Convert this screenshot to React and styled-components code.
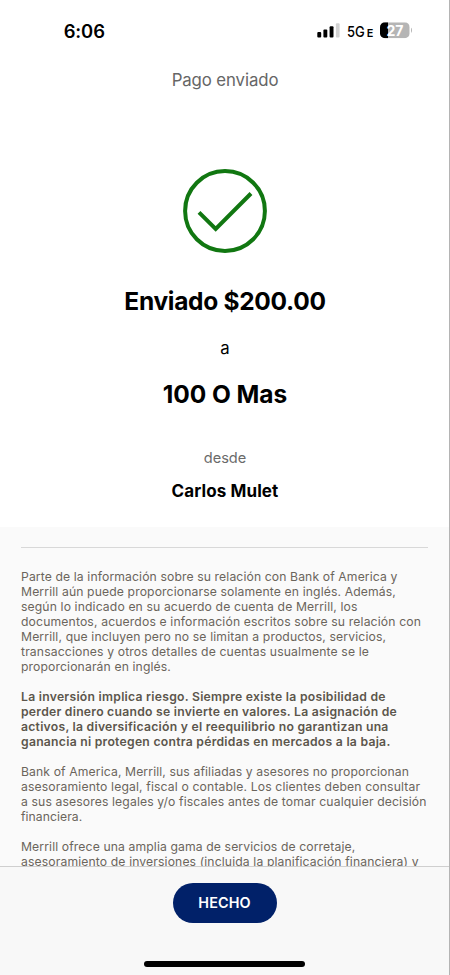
import React from 'react';
import styled, { createGlobalStyle } from 'styled-components';

const GlobalStyle = createGlobalStyle`
  * {
    box-sizing: border-box;
  }
  body {
    margin: 0;
    background: #fff;
  }
`;

const Screen = styled.div`
  width: 450px;
  height: 975px;
  display: flex;
  flex-direction: column;
  overflow: hidden;
  background: #fff;
  border-right: 1px solid #b4b4b4;
  font-family: Inter, 'Liberation Sans', sans-serif;
`;

// iOS status bar
const StatusBar = styled.header`
  flex: none;
  height: 62px;
  padding: 0 37px 0 63.7px;
  display: flex;
  align-items: center;
  justify-content: space-between;
`;

const Time = styled.span`
  font-size: 18.4px;
  font-weight: 600;
  letter-spacing: -0.1px;
  color: #000;
`;

const StatusIcons = styled.svg`
  width: 98px;
  height: 24px;
  font-family: Inter, 'Liberation Sans', sans-serif;
`;

const Title = styled.h1`
  flex: none;
  height: 36px;
  margin: 0;
  padding-left: 1px;
  text-align: center;
  font-size: 16.8px;
  font-weight: 400;
  line-height: 36px;
  letter-spacing: -0.1px;
  color: #666;
`;

const Summary = styled.section`
  flex: none;
  height: 428.5px;
  padding: 70px 0 0 1px;
  display: flex;
  flex-direction: column;
  align-items: center;
`;

const Check = styled.svg`
  width: 86px;
  height: 86px;
  flex: none;
`;

const Line = styled.div`
  flex: none;
  height: ${props => props.$height};
  line-height: ${props => props.$height};
  margin-top: ${props => props.$gap || '0'};
  font-size: ${props => props.$size};
  font-weight: ${props => props.$weight || 400};
  letter-spacing: ${props => props.$track || '0'};
  color: ${props => props.$color || '#000'};
  white-space: nowrap;
`;

const Disclosures = styled.section`
  flex: 1;
  min-height: 0;
  overflow: hidden;
  padding: 20.5px 21px 0;
  background: #fafafa;
`;

const Divider = styled.hr`
  height: 1px;
  margin: 0 0 21.3px;
  border: 0;
  background: #d8d8d8;
`;

const Paragraph = styled.p`
  margin: 0 0 14.98px;
  font-size: 12.2px;
  font-weight: ${props => (props.$strong ? 600 : 400)};
  line-height: 14.98px;
  color: ${props => (props.$strong ? '#5c564c' : '#6b655c')};
  white-space: nowrap;
`;

const Row = styled.span`
  display: block;
  letter-spacing: ${props => props.$track};
`;

const Footer = styled.footer`
  flex: none;
  height: 109px;
  padding: 16px 0 0;
  display: flex;
  flex-direction: column;
  align-items: center;
  background: #f8f8f8;
  border-top: 1px solid #cfcfcf;
`;

const DoneButton = styled.button`
  width: 104px;
  height: 39.5px;
  padding: 0;
  border: 0;
  border-radius: 20px;
  background: #012169;
  color: #fff;
  font-family: inherit;
  font-size: 14.4px;
  font-weight: 600;
  letter-spacing: 0.1px;
`;

const HomeIndicator = styled.div`
  width: 161px;
  height: 5.5px;
  margin-top: 38.5px;
  border-radius: 3px;
  background: #000;
`;

// each line carries its own tracking
const paragraphs = [
  {
    lines: [
      ['Parte de la información sobre su relación con Bank of America y', '0.11px'],
      ['Merrill aún puede proporcionarse solamente en inglés. Además,', '0.12px'],
      ['según lo indicado en su acuerdo de cuenta de Merrill, los', '0.12px'],
      ['documentos, acuerdos e información escritos sobre su relación con', '0.14px'],
      ['Merrill, que incluyen pero no se limitan a productos, servicios,', '0.13px'],
      ['transacciones y otros detalles de cuentas usualmente se le', '0.14px'],
      ['proporcionarán en inglés.', '0.12px'],
    ],
  },
  {
    strong: true,
    lines: [
      ['La inversión implica riesgo. Siempre existe la posibilidad de', '0.26px'],
      ['perder dinero cuando se invierte en valores. La asignación de', '0.25px'],
      ['activos, la diversificación y el reequilibrio no garantizan una', '0.25px'],
      ['ganancia ni protegen contra pérdidas en mercados a la baja.', '0.26px'],
    ],
  },
  {
    lines: [
      ['Bank of America, Merrill, sus afiliadas y asesores no proporcionan', '0.11px'],
      ['asesoramiento legal, fiscal o contable. Los clientes deben consultar', '0.14px'],
      ['a sus asesores legales y/o fiscales antes de tomar cualquier decisión', '0.12px'],
      ['financiera.', '0.05px'],
    ],
  },
  {
    lines: [
      ['Merrill ofrece una amplia gama de servicios de corretaje,', '0.11px'],
      ['asesoramiento de inversiones (incluida la planificación financiera) y', '0.12px'],
    ],
  },
];

const Status = () => (
  <StatusIcons viewBox="0 0 98 24">
    <rect x="3.3" y="13" width="3.9" height="5.4" rx="1" fill="#000" />
    <rect x="9.4" y="10.6" width="3.9" height="7.8" rx="1" fill="#000" />
    <rect x="15.6" y="7.2" width="3.9" height="11.2" rx="1" fill="#000" />
    <rect x="21.9" y="4.2" width="3.7" height="14.2" rx="1" fill="#d2d2d2" />
    <text x="33" y="18" fontSize="15" fontWeight="500" textLength="17.8" lengthAdjust="spacingAndGlyphs">5G</text>
    <text x="52.7" y="17.8" fontSize="10.8" fontWeight="600" textLength="6.6" lengthAdjust="spacingAndGlyphs">E</text>
    <clipPath id="battery">
      <rect x="66" y="3.3" width="29.7" height="16" rx="5" />
    </clipPath>
    <g clipPath="url(#battery)">
      <rect x="66" y="3.3" width="29.7" height="16" fill="#b5b5b5" />
      <rect x="66" y="3.3" width="8" height="16" fill="#000" />
    </g>
    <path d="M97 8.8c1.3.6 1.3 4.4 0 5z" fill="#b5b5b5" />
    <text x="72.5" y="16.6" fontSize="14.2" fontWeight="700" fill="#fff" textLength="17" lengthAdjust="spacingAndGlyphs">27</text>
  </StatusIcons>
);

const App = () => (
  <>
    <GlobalStyle />
    <Screen>
      <StatusBar>
        <Time>6:06</Time>
        <Status />
      </StatusBar>
      <Title>Pago enviado</Title>
      <Summary>
        <Check viewBox="0 0 86 86" fill="none" stroke="#117711">
          <circle cx="43" cy="43" r="39.9" strokeWidth="4" />
          <path d="M17 44.3L33.7 61L69 25.5" strokeWidth="4" />
        </Check>
        <Line $height="40px" $gap="27px" $size="24.5px" $weight={700} $track="-0.3px">Enviado $200.00</Line>
        <Line $height="30px" $gap="12px" $size="16.8px">a</Line>
        <Line $height="40px" $gap="11.3px" $size="24.5px" $weight={700} $track="-0.05px">100 O Mas</Line>
        <Line $height="24px" $gap="31.9px" $size="14.6px" $color="#6a6a6a">desde</Line>
        <Line $height="24px" $gap="9px" $size="17px" $weight={700} $track="0.1px">Carlos Mulet</Line>
      </Summary>
      <Disclosures>
        <Divider />
        {paragraphs.map((paragraph, i) => (
          <Paragraph key={i} $strong={paragraph.strong}>
            {paragraph.lines.map(([text, track]) => (
              <Row key={text} $track={track}>{text}</Row>
            ))}
          </Paragraph>
        ))}
      </Disclosures>
      <Footer>
        <DoneButton>HECHO</DoneButton>
        <HomeIndicator />
      </Footer>
    </Screen>
  </>
);

export default App;
